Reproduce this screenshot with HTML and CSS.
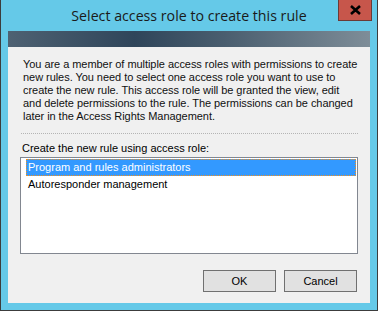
FILE: index.html
```html
<!DOCTYPE html>
<html lang="en">

<head>
  <meta charset="UTF-8">
  <title>Select access role to create this rule</title>
  <link rel="stylesheet" href="styles.css">
</head>

<body>
  <div class="janela">
    <!-- Barra de título -->
    <div class="titulo">
      <span class="titulo-texto">Select access role to create this rule</span>
      <div class="fechar">
        <svg width="13" height="10" viewBox="0 0 13 10">
          <path d="M2 1 L11 9 M11 1 L2 9" stroke="#000" stroke-width="2.6" fill="none" />
        </svg>
      </div>
    </div>

    <div class="cliente">
      <div class="faixa"></div>

      <div class="conteudo">
        <p class="descricao">
          You are a member of multiple access roles with permissions to create<br>
          new rules. You need to select one access role you want to use to<br>
          create the new rule. This access role will be granted the view, edit<br>
          and delete permissions to the rule. The permissions can be changed<br>
          later in the Access Rights Management.
        </p>

        <div class="separador"></div>

        <label class="rotulo">Create the new rule using access role:</label>
        <div class="lista">
          <div class="item selecionado">Program and rules administrators</div>
          <div class="item">Autoresponder management</div>
        </div>

        <!-- Botões -->
        <div class="botoes">
          <button class="botao">OK</button>
          <button class="botao">Cancel</button>
        </div>
      </div>
    </div>
  </div>
</body>

</html>
```

FILE: styles.css
```css
/* Estilos Gerais */
body {
  margin: 0;
  font-family: "Liberation Sans", Arial, sans-serif;
  font-size: 11px;
  color: #000;
}

.janela {
  width: 378px;
  height: 311px;
  box-sizing: border-box;
  background-color: #65c9e8;
  border: 1px solid #3c3c3c;
  border-top: none;
  display: flex;
  flex-direction: column;
}

/* Barra de título */
.titulo {
  height: 31px;
  position: relative;
  display: flex;
  justify-content: center;
  align-items: center;
}

.titulo-texto {
  font-family: "Open Sans", "Liberation Sans", sans-serif;
  font-size: 14.2px;
  color: #1a1a1a;
  margin-top: -1px;
}

.fechar {
  position: absolute;
  top: 0;
  right: 5px;
  width: 32px;
  height: 20px;
  background-color: #c7564b;
  border: 1px solid #6b3a36;
  border-top: none;
  display: flex;
  justify-content: center;
  align-items: center;
}

/* Área do cliente */
.cliente {
  flex: 1;
  margin: 0 7px 7px 7px;
  background-color: #f0f0f0;
  display: flex;
  flex-direction: column;
}

.faixa {
  height: 16px;
  background: linear-gradient(90deg, #4e6172 0%, #2f455a 35%, #4a5e6f 60%, #7e8d98 100%);
}

.conteudo {
  padding: 11px 12px 0 12px;
  display: flex;
  flex-direction: column;
}

.descricao {
  margin: 0 0 0 3px;
  line-height: 13px;
  letter-spacing: -0.05px;
  white-space: nowrap;
  color: #111;
}

.separador {
  border-top: 1px dotted #b4b4b4;
  margin: 10px 0 0 1px;
}

.rotulo {
  margin: 8px 0 2px 2px;
  line-height: 13px;
}

.lista {
  height: 94px;
  background-color: #fff;
  border: 1px solid #828790;
  padding: 1px 1px 0 5px;
}

.item {
  height: 17px;
  line-height: 17px;
  padding-left: 2px;
  box-sizing: border-box;
}

.item.selecionado {
  background-color: #3399ff;
  color: #fff;
  outline: 1px dotted #f09020;
  outline-offset: -1px;
}

.botoes {
  display: flex;
  justify-content: flex-end;
  gap: 8px;
  margin-top: 16px;
  padding-right: 1px;
}

.botao {
  width: 73px;
  height: 22px;
  background-color: #e1e1e1;
  border: 1px solid #707070;
  font-family: "Liberation Sans", Arial, sans-serif;
  font-size: 11px;
  color: #000;
  padding: 0;
}
```
